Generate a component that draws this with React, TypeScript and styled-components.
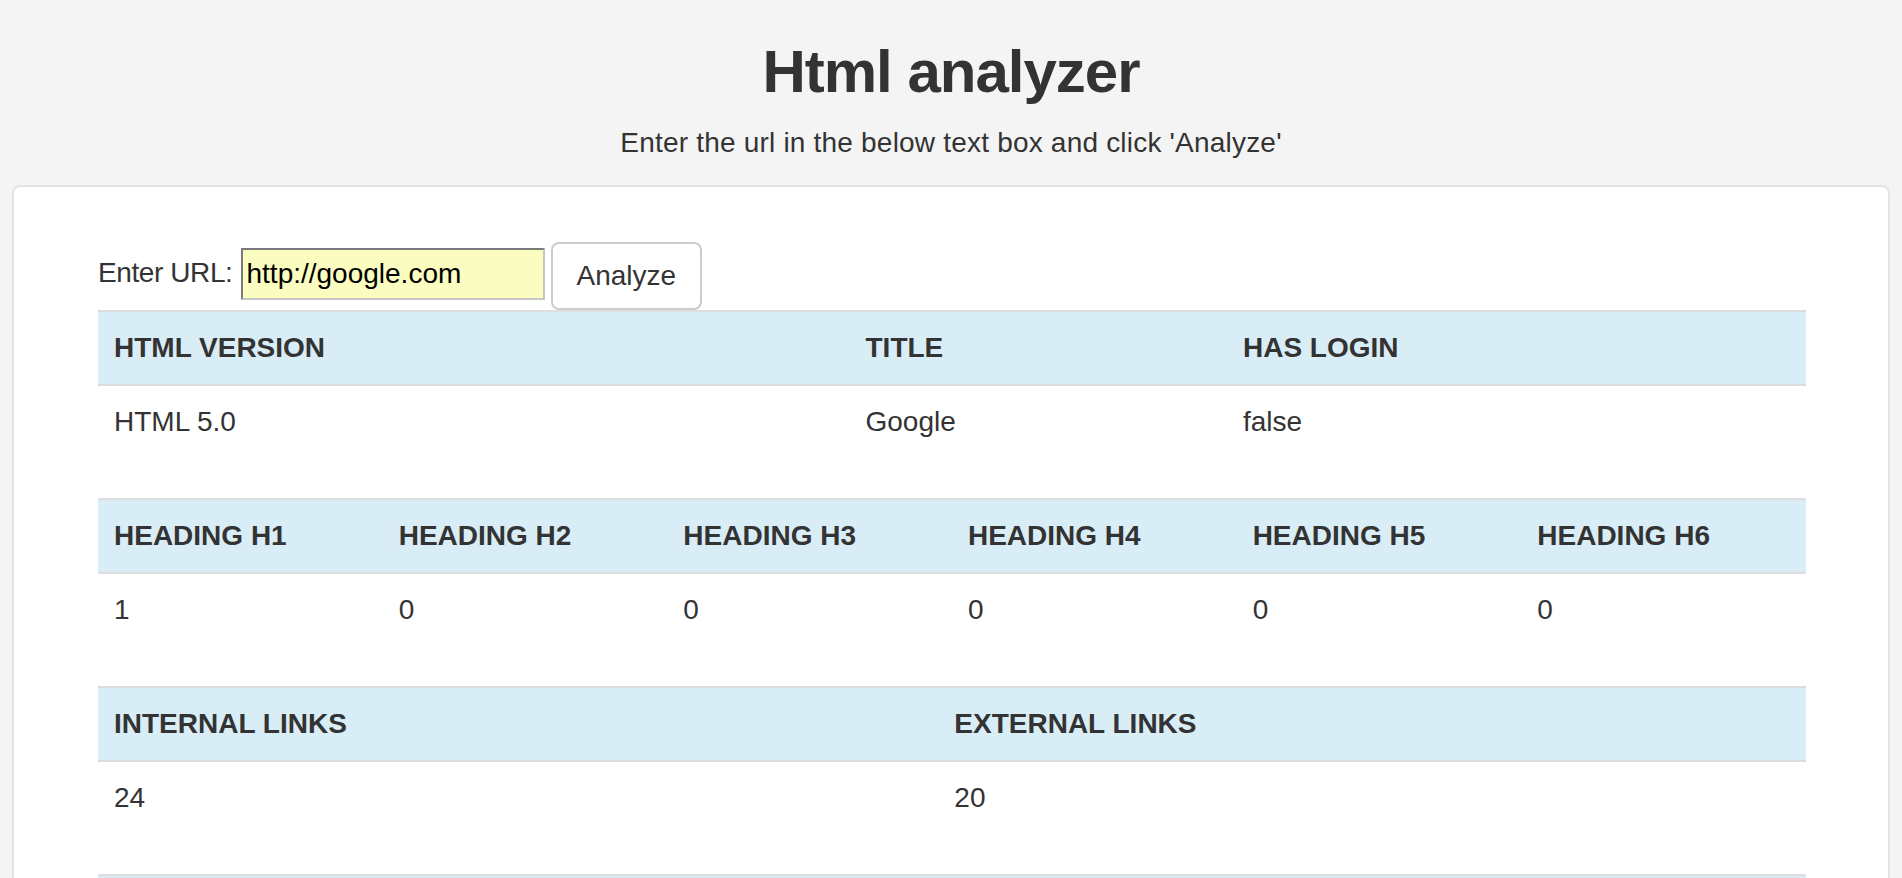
import styled, { createGlobalStyle } from 'styled-components';

const GlobalStyle = createGlobalStyle`
  html, body {
    margin: 0;
    padding: 0;
  }

  body {
    background: #f4f4f4;
    color: #333;
    font-family: "Liberation Sans", Arial, Helvetica, sans-serif;
    font-size: 28px;
    line-height: 40px;
  }
`;

interface ReportTable {
  widths: (string | undefined)[],
  heads: string[],
  values: string[],
}

const tables: ReportTable[] = [
  {
    widths: ['44%', '22.1%', undefined],
    heads: ['HTML VERSION', 'TITLE', 'HAS LOGIN'],
    values: ['HTML 5.0', 'Google', 'false'],
  },
  {
    widths: [],
    heads: ['HEADING H1', 'HEADING H2', 'HEADING H3', 'HEADING H4', 'HEADING H5', 'HEADING H6'],
    values: ['1', '0', '0', '0', '0', '0'],
  },
  {
    widths: ['49.2%', undefined],
    heads: ['INTERNAL LINKS', 'EXTERNAL LINKS'],
    values: ['24', '20'],
  },
  {
    widths: [],
    heads: [''],
    values: [],
  },
];

const Page = styled.div`
  padding: 39px 12px 0;
`;

const Header = styled.header`
  text-align: center;
`;

const Title = styled.h2`
  margin: 0;
  font-size: 60px;
  line-height: 66px;
  font-weight: 700;
  letter-spacing: -1px;
`;

const Lead = styled.p`
  margin: 18px 0 22px;
  letter-spacing: 0.2px;
`;

const Panel = styled.section`
  background: #fff;
  border: 2px solid #e3e3e3;
  border-radius: 8px;
  padding: 55px 82px 40px 84px;
`;

const UrlForm = styled.form`
  display: flex;
  align-items: flex-start;
`;

const Label = styled.label`
  margin-top: 11px;
  margin-right: 8px;
  letter-spacing: -0.4px;
`;

const UrlInput = styled.input`
  box-sizing: border-box;
  width: 304px;
  height: 52px;
  margin: 6px 0 0;
  padding: 2px 4px;
  font-family: inherit;
  font-size: 28px;
  color: #000;
  background: #fafdbf;
  border: 2px solid;
  border-color: #7a7a7a #c6c6c6 #c6c6c6 #7a7a7a;
  outline: none;
`;

const Button = styled.button`
  box-sizing: border-box;
  height: 68px;
  margin-left: 6px;
  padding: 12px 24px;
  font-family: inherit;
  font-size: 28px;
  line-height: 40px;
  color: #333;
  background: #fff;
  border: 2px solid #ccc;
  border-radius: 8px;
`;

const Table = styled.table`
  width: 100%;
  table-layout: fixed;
  border-collapse: separate;
  border-spacing: 0;
  margin-bottom: 40px;
`;

const Col = styled.col<{$width?: string}>`
  ${({ $width }) => $width && `width: ${$width};`}
`;

const Th = styled.th`
  height: 40px;
  text-align: left;
  padding: 16px;
  background: #d9edf7;
  font-weight: 700;
  white-space: nowrap;
  border-top: 2px solid #dedede;
  border-bottom: 2px solid #dedede;
`;

const Td = styled.td`
  padding: 16px;
  color: #333;
`;

export default function App() {
  return (
    <Page>
      <GlobalStyle />
      <Header>
        <Title>Html analyzer</Title>
        <Lead>Enter the url in the below text box and click 'Analyze'</Lead>
      </Header>

      <Panel>
        <UrlForm onSubmit={(e) => e.preventDefault()}>
          <Label htmlFor="url">Enter URL:</Label>
          <UrlInput id="url" type="text" defaultValue="http://google.com" />
          <Button type="submit">Analyze</Button>
        </UrlForm>

        {tables.map((t, n) => (
          <Table key={n}>
            <colgroup>
              {t.heads.map((h, i) => <Col key={i} $width={t.widths[i]} />)}
            </colgroup>
            <thead>
              <tr>
                {t.heads.map((h, i) => <Th key={i}>{h}</Th>)}
              </tr>
            </thead>
            {t.values.length > 0 && (
              <tbody>
                <tr>
                  {t.values.map((v, i) => <Td key={i}>{v}</Td>)}
                </tr>
              </tbody>
            )}
          </Table>
        ))}
      </Panel>
    </Page>
  );
}
